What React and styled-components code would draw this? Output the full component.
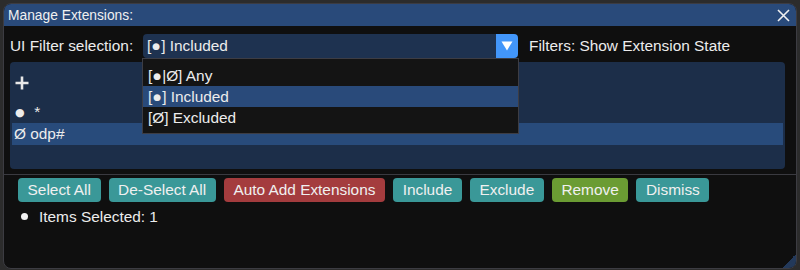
import React from "react";
import styled, { createGlobalStyle } from "styled-components";

const Global = createGlobalStyle`
  html, body { margin: 0; padding: 0; background: #2c2c2c; }
  body { font-family: "Liberation Sans", Arial, sans-serif; color: #ececec; }
  * { box-sizing: border-box; }
`;

const Window = styled.div`
  position: relative;
  margin: 3px 3px 0 3px;
  width: 794px;
  height: 266px;
  background: #0f0f0f;
  border: 1px solid #3c3c42;
  border-radius: 8px;
  overflow: hidden;
  display: flex;
  flex-direction: column;
`;

const TitleBar = styled.div`
  height: 22px;
  background: #294a7a;
  display: flex;
  align-items: center;
  justify-content: space-between;
  padding: 0 6px 0 4px;
  font-size: 13.8px;
  color: #f0f0f0;
`;

const CloseBtn = styled.div`
  width: 14px;
  height: 14px;
  display: flex;
  align-items: center;
  justify-content: center;
`;

const Content = styled.div`
  padding: ${(p) => (p.$top ? "8px" : "0")} 11px 0 6px;
  display: flex;
  flex-direction: column;
`;

const FilterRow = styled.div`
  display: flex;
  align-items: center;
  font-size: 15.4px;
  height: 24px;
`;

const Label = styled.span`
  width: 133px;
  white-space: nowrap;
`;

const ComboWrap = styled.div`
  position: relative;
  width: 375px;
  height: 24px;
  display: flex;
  margin-right: 11px;
`;

const ComboValue = styled.div`
  flex: 1;
  background: #1e3250;
  border-radius: 4px 0 0 4px;
  padding-left: 4px;
  display: flex;
  align-items: center;
  white-space: pre;
`;

const ArrowBtn = styled.div`
  width: 22px;
  background: #4296fa;
  border-radius: 0 4px 4px 0;
  display: flex;
  align-items: center;
  justify-content: center;
`;

const Popup = styled.div`
  position: absolute;
  top: 24px;
  left: -1px;
  width: 377px;
  height: 76px;
  background: #141414;
  border: 1px solid #3d3d44;
  padding-top: 6px;
  z-index: 2;
`;

const PopupItem = styled.div`
  height: 21px;
  display: flex;
  align-items: center;
  padding-left: 5px;
  background: ${(p) => (p.$active ? "#294a7a" : "transparent")};
  white-space: pre;
`;

const Dot = styled.span`
  font-family: "DejaVu Sans", sans-serif;
  font-size: ${(p) => (p.$big ? "11px" : "9px")};
  vertical-align: ${(p) => (p.$big ? "1px" : "2px")};
  padding: 0 1px;
`;

const ListBox = styled.div`
  margin-top: 4px;
  width: 775px;
  height: 107px;
  background: #1c2e49;
  border-radius: 4px;
  padding: 10px 2px 0 2px;
  display: flex;
  flex-direction: column;
  font-size: 15.4px;
`;

const PlusRow = styled.div`
  height: 22px;
  display: flex;
  align-items: center;
  padding-left: 3px;
  margin-bottom: 7px;
`;

const ListRow = styled.div`
  height: 22px;
  display: flex;
  align-items: center;
  padding-left: 2px;
  background: ${(p) => (p.$selected ? "#284b7b" : "transparent")};
  white-space: pre;
`;

const Separator = styled.div`
  height: 1px;
  background: #3a3a40;
  margin: 5px 0 0 0;
`;

const Indented = styled.div`
  padding-left: 8px;
  display: flex;
  flex-direction: column;
`;

const ButtonRow = styled.div`
  margin-top: 3px;
  display: flex;
  gap: 8px;
`;

const Button = styled.div`
  height: 24px;
  padding: 0 9.6px;
  border-radius: 4px;
  display: flex;
  align-items: center;
  font-size: 15.4px;
  color: #f0f0f0;
  white-space: nowrap;
  background: ${(p) =>
    p.$tone === "red" ? "#a43c3e" : p.$tone === "green" ? "#6b9c33" : "#3a9898"};
`;

const StatusRow = styled.div`
  margin-top: 4px;
  height: 21px;
  display: flex;
  align-items: center;
  font-size: 15.4px;
`;

const Bullet = styled.span`
  width: 7px;
  height: 7px;
  border-radius: 50%;
  background: #f0f0f0;
  margin: 0 11px 0 3px;
`;

const Grip = styled.div`
  position: absolute;
  right: 0;
  bottom: 0;
  width: 14px;
  height: 14px;
  background: linear-gradient(135deg, transparent 50%, #23395a 50%);
`;

export default function App() {
  return (
    <>
      <Global />
      <Window>
        <TitleBar>
          <span>Manage Extensions:</span>
          <CloseBtn>
            <svg width="13" height="13" viewBox="0 0 13 13">
              <path d="M1 1L12 12M12 1L1 12" stroke="#f0f0f0" strokeWidth="1.6" />
            </svg>
          </CloseBtn>
        </TitleBar>
        <Content $top>
          <FilterRow>
            <Label>UI Filter selection:</Label>
            <ComboWrap>
              <ComboValue>
                [<Dot>●</Dot>] Included
              </ComboValue>
              <ArrowBtn>
                <svg width="12" height="10" viewBox="0 0 12 10">
                  <path d="M0.5 0.5H11.5L6 9.5Z" fill="#ffffff" />
                </svg>
              </ArrowBtn>
              <Popup>
                <PopupItem>
                  [<Dot>●</Dot>|Ø] Any
                </PopupItem>
                <PopupItem $active>
                  [<Dot>●</Dot>] Included
                </PopupItem>
                <PopupItem>[Ø] Excluded</PopupItem>
              </Popup>
            </ComboWrap>
            <span>Filters: Show Extension State</span>
          </FilterRow>
          <ListBox>
            <PlusRow>
              <svg width="14" height="14" viewBox="0 0 14 14">
                <path d="M7 0.5V13.5M0.5 7H13.5" stroke="#e8e8e8" strokeWidth="2.6" />
              </svg>
            </PlusRow>
            <ListRow>
              <Dot $big>●</Dot>{"  *"}
            </ListRow>
            <ListRow $selected>{"Ø odp#"}</ListRow>
          </ListBox>
        </Content>
        <Separator />
        <Content>
          <Indented>
            <ButtonRow>
              <Button>Select All</Button>
              <Button>De-Select All</Button>
              <Button $tone="red">Auto Add Extensions</Button>
              <Button>Include</Button>
              <Button>Exclude</Button>
              <Button $tone="green">Remove</Button>
              <Button>Dismiss</Button>
            </ButtonRow>
            <StatusRow>
              <Bullet />
              Items Selected: 1
            </StatusRow>
          </Indented>
        </Content>
        <Grip />
      </Window>
    </>
  );
}
